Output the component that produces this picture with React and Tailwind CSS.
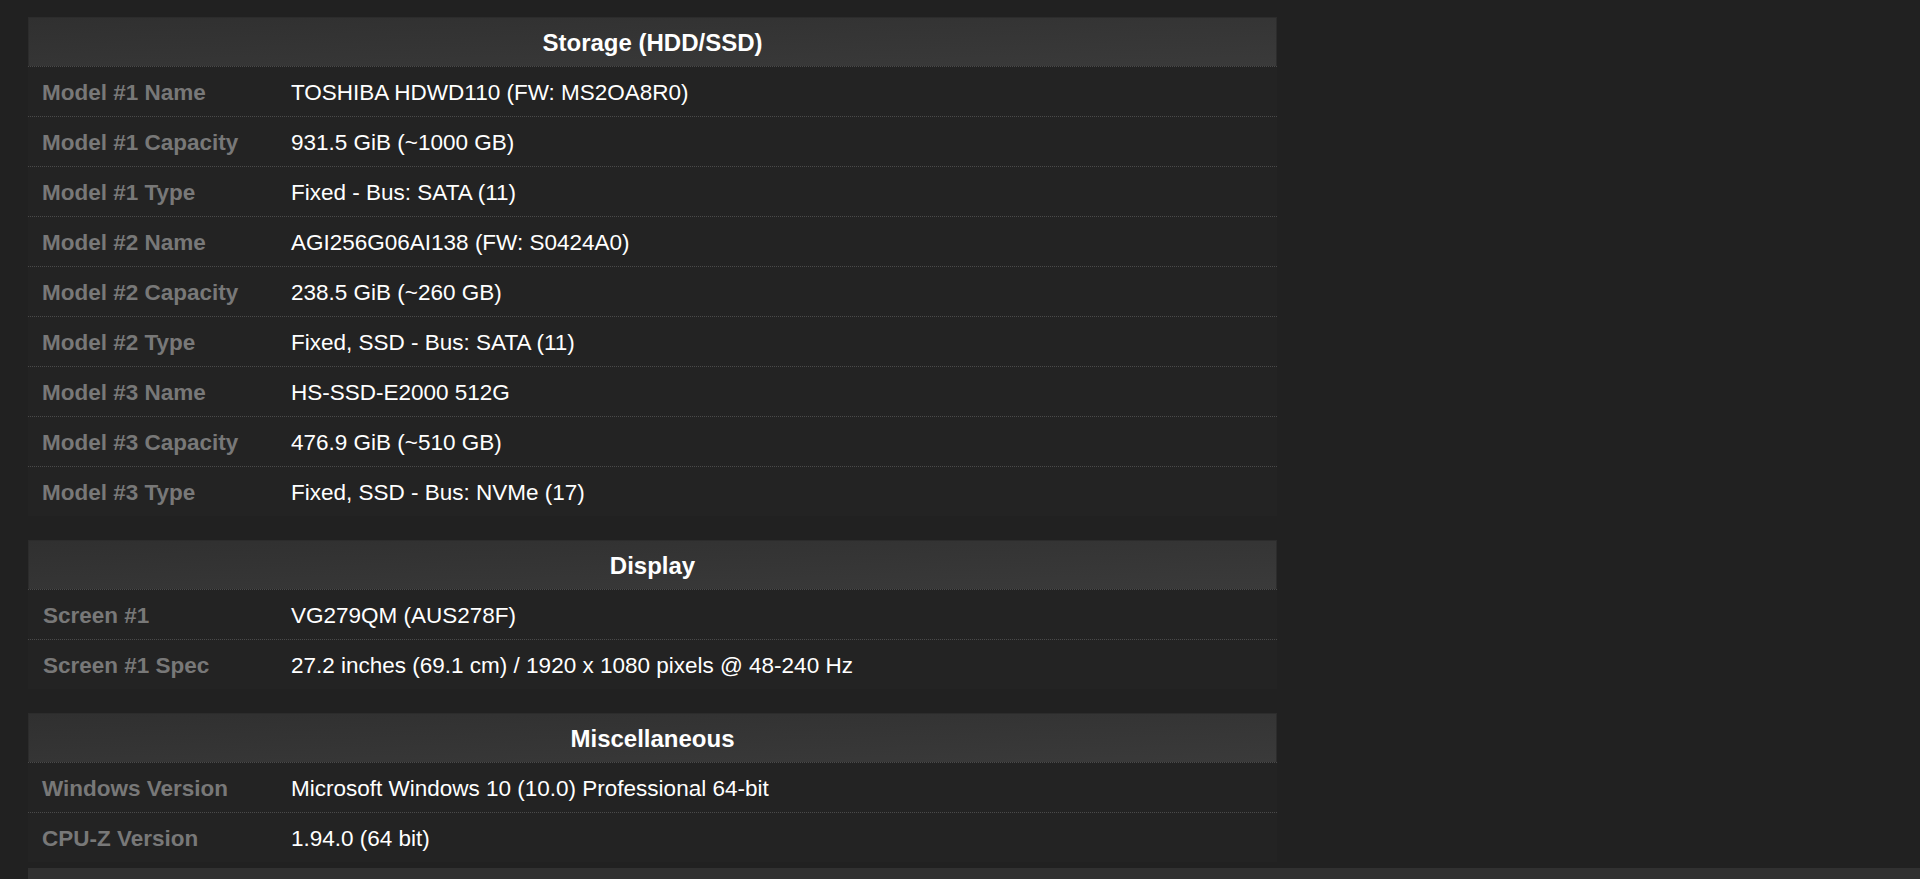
import React from 'react';

const sections = [
  {
    title: 'Storage (HDD/SSD)',
    rows: [
      ['Model #1 Name', 'TOSHIBA HDWD110 (FW: MS2OA8R0)'],
      ['Model #1 Capacity', '931.5 GiB (~1000 GB)'],
      ['Model #1 Type', 'Fixed - Bus: SATA (11)'],
      ['Model #2 Name', 'AGI256G06AI138 (FW: S0424A0)'],
      ['Model #2 Capacity', '238.5 GiB (~260 GB)'],
      ['Model #2 Type', 'Fixed, SSD - Bus: SATA (11)'],
      ['Model #3 Name', 'HS-SSD-E2000 512G'],
      ['Model #3 Capacity', '476.9 GiB (~510 GB)'],
      ['Model #3 Type', 'Fixed, SSD - Bus: NVMe (17)'],
    ],
  },
  {
    title: 'Display',
    rows: [
      ['Screen #1', 'VG279QM (AUS278F)'],
      ['Screen #1 Spec', '27.2 inches (69.1 cm) / 1920 x 1080 pixels @ 48-240 Hz'],
    ],
    wide: true,
  },
  {
    title: 'Miscellaneous',
    rows: [
      ['Windows Version', 'Microsoft Windows 10 (10.0) Professional 64-bit'],
      ['CPU-Z Version', '1.94.0 (64 bit)'],
    ],
  },
];

function Section({ title, rows, wide }) {
  return (
    <div className="mb-6 w-[1249px] bg-[#232323]">
      <div className="flex h-[49px] items-center justify-center border border-b-0 border-[#2c2c2c] bg-gradient-to-br from-[#303030] to-[#3a3a3a] pt-[2px] text-[24px] font-bold text-white">
        {title}
      </div>
      {rows.map(([label, value]) => (
        <div key={label} className="flex h-[50px] items-center border-t border-dotted border-[#4a4a4a] pt-[2px]">
          <div
            className={
              'w-[250px] text-[22.5px] font-bold text-[#787878] ' +
              (wide ? 'pl-[15px]' : 'pl-[14px]')
            }
          >
            {label}
          </div>
          <div className="pl-[13px] text-[22.5px] text-white">{value}</div>
        </div>
      ))}
    </div>
  );
}

export default function App() {
  return (
    <div
      className="flex h-[879px] flex-col overflow-hidden bg-[#212121] pl-[28px] pt-[17px]"
      style={{ fontFamily: '"Liberation Sans", Arial, sans-serif' }}
    >
      {sections.map((s) => (
        <Section key={s.title} {...s} />
      ))}
      <div className="-mt-[18px] h-[20px] bg-[#313131]" />
    </div>
  );
}
